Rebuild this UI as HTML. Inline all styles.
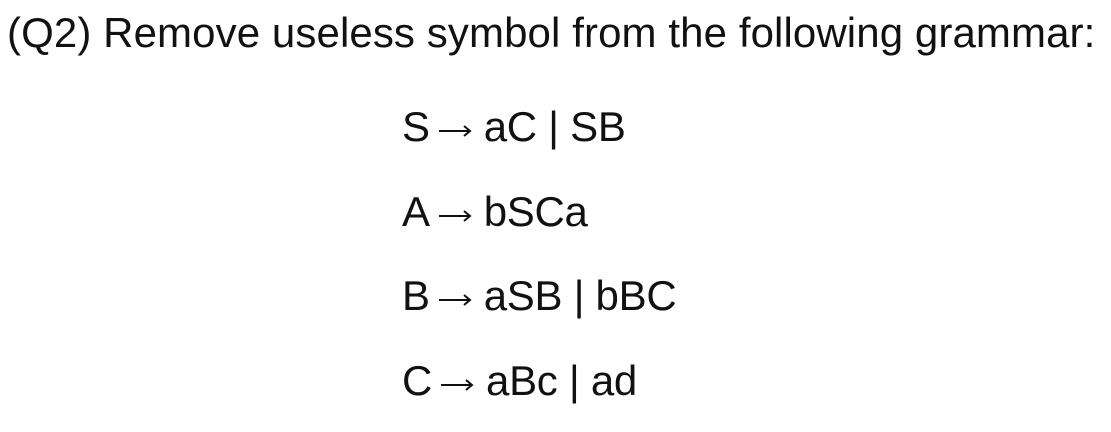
<!DOCTYPE html>
<html><head><meta charset="utf-8"><style>
html,body{margin:0;padding:0;background:#fff;width:1111px;height:432px;overflow:hidden}
body{font-family:"Liberation Sans",sans-serif;color:#111;position:relative}
.t{position:absolute;left:7px;top:9px;font-size:42px;white-space:nowrap;letter-spacing:0.1px}
.g{position:absolute;left:402px;font-size:42px;white-space:nowrap;letter-spacing:-0.3px}
.a{display:inline-block;width:34px;height:14px;margin:0 12px 0 8px;vertical-align:3px}
</style></head><body>
<div class="t">(Q2) Remove useless symbol from the following grammar:</div>
<div class="g" style="top:103px">S<svg class="a" viewBox="0 0 34 14"><path d="M1 7H32M26 2L32 7L26 12" stroke="#111" stroke-width="2" fill="none"/></svg>aC | SB</div>
<div class="g" style="top:188px">A<svg class="a" viewBox="0 0 34 14"><path d="M1 7H32M26 2L32 7L26 12" stroke="#111" stroke-width="2" fill="none"/></svg>bSCa</div>
<div class="g" style="top:272px">B<svg class="a" viewBox="0 0 34 14"><path d="M1 7H32M26 2L32 7L26 12" stroke="#111" stroke-width="2" fill="none"/></svg>aSB | bBC</div>
<div class="g" style="top:357px">C<svg class="a" viewBox="0 0 34 14"><path d="M1 7H32M26 2L32 7L26 12" stroke="#111" stroke-width="2" fill="none"/></svg>aBc | ad</div>
</body></html>
